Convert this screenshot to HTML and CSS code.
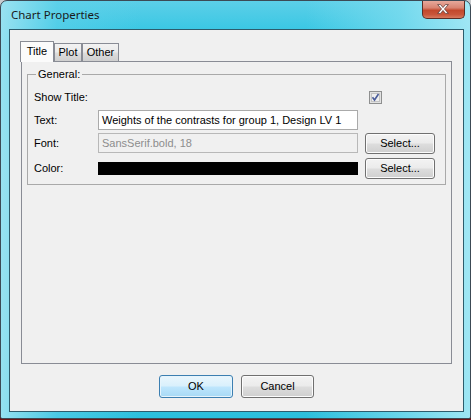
FILE: index.html
```html
<!DOCTYPE html>
<html>
<head>
<meta charset="utf-8">
<link rel="stylesheet" href="styles.css">
</head>
<body>
<div class="window">
  <div class="titlebar">
    <span class="title">Chart Properties</span>
    <div class="close">
      <svg width="43" height="18" viewBox="0 0 43 18">
        <path d="M16 4.5 L19 4.5 L21.5 7.5 L24 4.5 L27 4.5 L23 9 L27 13.5 L24 13.5 L21.5 10.5 L19 13.5 L16 13.5 L20 9 Z" fill="#ffffff" stroke="#5a3a36" stroke-width="0.8" stroke-linejoin="round"/>
      </svg>
    </div>
  </div>
  <div class="client">
    <div class="tabpane">
      <div class="tabs">
        <div class="tab selected">Title</div>
        <div class="tab plot">Plot</div>
        <div class="tab other">Other</div>
      </div>
      <div class="panel">
        <fieldset class="group">
          <legend>General:</legend>
          <div class="grid">
            <div class="label">Show Title:</div>
            <div></div>
            <div class="checkcell">
              <svg width="13" height="13" viewBox="0 0 13 13">
                <rect x="0.5" y="0.5" width="12" height="12" fill="#e2e2e2" stroke="#8e8f8f"/>
                <rect x="2.5" y="2.5" width="8" height="8" fill="#efefef" stroke="#c4c4c4" stroke-width="1"/>
                <path d="M3.5 6.2 L5.5 9 L9.5 3" fill="none" stroke="#4a5c9a" stroke-width="1.6"/>
              </svg>
            </div>

            <div class="label">Text:</div>
            <div class="field">Weights of the contrasts for group 1, Design LV 1</div>
            <div></div>

            <div class="label">Font:</div>
            <div class="field disabled">SansSerif.bold, 18</div>
            <div class="btn">Select...</div>

            <div class="label">Color:</div>
            <div class="colorcell"><div class="swatch"></div></div>
            <div class="btn">Select...</div>
          </div>
        </fieldset>
      </div>
    </div>
    <div class="buttons">
      <div class="btn big default">OK</div>
      <div class="btn big cancel">Cancel</div>
    </div>
  </div>
</div>
</body>
</html>
```

FILE: styles.css
```css
html, body {
  margin: 0;
  padding: 0;
}
body {
  width: 471px;
  height: 420px;
  overflow: hidden;
  background: linear-gradient(to bottom, #c9cccf 0%, #b7bbbf 40%, #8a3030 85%, #6a1414 100%);
  font-family: "Liberation Sans", Arial, sans-serif;
  font-size: 11px;
  color: #000;
}
.window {
  box-sizing: border-box;
  width: 471px;
  height: 419px;
  border: 1px solid #3c4a55;
  border-radius: 7px 7px 2px 2px;
  padding: 0 6px 6px 8px;
  display: flex;
  flex-direction: column;
  background:
    linear-gradient(to right, rgba(160,228,242,0.9) 0%, rgba(95,210,234,0.6) 12%, rgba(40,198,226,0) 30%, rgba(40,198,226,0) 65%, rgba(130,222,240,0.7) 85%, rgba(170,234,246,0.9) 100%),
    linear-gradient(to bottom, #5ccfe8 0%, #2bc4e2 10%, #55cfe8 40%, #3bc7e3 80%, #2cbfdc 100%);
}
.titlebar {
  height: 28px;
  display: flex;
  align-items: flex-start;
  flex-shrink: 0;
}
.title {
  font-family: "Noto Sans", "Open Sans", sans-serif;
  font-size: 11.5px;
  color: #1a1a1a;
  margin-top: 6px;
  margin-left: 2px;
}
.close {
  margin-left: auto;
  width: 43px;
  height: 18px;
  box-sizing: border-box;
  border: 1px solid #5b2e26;
  border-top: none;
  border-radius: 0 0 5px 5px;
  background: linear-gradient(to bottom, #e7a99b 0%, #d88472 40%, #c2482c 55%, #c9563a 80%, #d77a5f 100%);
  margin-right: -1px;
  display: flex;
}
.close svg {
  margin: -1px 0 0 -1px;
}
.client {
  flex: 1;
  border: 1px solid #2d5c6c;
  background: #f0f0f0;
  display: flex;
  flex-direction: column;
  min-height: 0;
}
.tabpane {
  flex: 1;
  margin: 11px 11px 0 11px;
  display: flex;
  flex-direction: column;
  min-height: 0;
}
.tabs {
  display: flex;
  align-items: flex-end;
  height: 20px;
  margin-left: -1px;
  position: relative;
  z-index: 1;
}
.tab {
  box-sizing: border-box;
  border: 1px solid #898c95;
  border-bottom: none;
  text-align: center;
  line-height: 17px;
  height: 18px;
  background: linear-gradient(to bottom, #f2f2f2 0%, #ebebeb 45%, #dcdcdc 55%, #cfcfcf 100%);
}
.tab.selected {
  width: 34px;
  height: 21px;
  margin-bottom: -1px;
  background: #fbfbfb;
  line-height: 18px;
}
.tab.plot {
  width: 28px;
  margin-left: 0;
}
.tab.other {
  width: 37px;
}
.panel {
  flex: 1;
  border: 1px solid #898c95;
  background: #f0f0f0;
  padding: 6px 5px 0 5px;
}
.group {
  margin: 0;
  border: 1px solid #a9a9a9;
  padding: 6px 9px 5px 6px;
  min-width: 0;
}
.group legend {
  padding: 0 2px;
  margin-left: 2px;
  line-height: 13px;
}
.grid {
  display: grid;
  grid-template-columns: 57px 260px 70px;
  grid-template-rows: 20px 20px 22px 21px;
  column-gap: 7px;
  row-gap: 3px;
}
.label {
  display: flex;
  align-items: center;
  height: 20px;
  white-space: nowrap;
}
.checkcell {
  display: flex;
  align-items: center;
  padding-left: 4px;
}
.field {
  box-sizing: border-box;
  height: 20px;
  border: 1px solid #aaaaaa;
  background: #ffffff;
  padding: 0 3px;
  line-height: 18px;
  white-space: nowrap;
  overflow: hidden;
}
.field.disabled {
  background: #f0f0f0;
  border-color: #b8b8b8;
  color: #8d8d8d;
}
.colorcell {
  display: flex;
  align-items: center;
}
.swatch {
  width: 100%;
  height: 13px;
  background: #000;
}
.btn {
  box-sizing: border-box;
  height: 21px;
  border: 1px solid #707070;
  border-radius: 3px;
  background: linear-gradient(to bottom, #f3f3f3 0%, #ebebeb 48%, #dddddd 52%, #cfcfcf 100%);
  text-align: center;
  line-height: 19px;
  box-shadow: inset 0 0 0 1px #fcfcfc;
}
.buttons {
  display: flex;
  justify-content: center;
  gap: 8px;
  margin: 11px 0 13px 0;
  flex-shrink: 0;
}
.btn.big {
  height: 23px;
  line-height: 21px;
}
.btn.default {
  width: 74px;
  border-color: #3c7fb1;
  background: linear-gradient(to bottom, #eaf6fd 0%, #d9f0fc 48%, #bee6fd 52%, #a7d9f5 100%);
  box-shadow: inset 0 0 0 1px #e6f4fc;
}
.btn.cancel {
  width: 73px;
}
```
